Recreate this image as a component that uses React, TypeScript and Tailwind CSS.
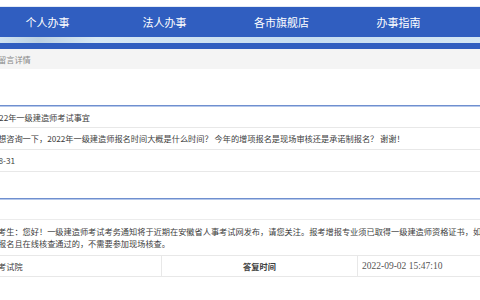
const navItems = ["个人办事", "法人办事", "各市旗舰店", "办事指南"];

const App = () => {
  return (
    <div
      className="w-[480px] h-[300px] overflow-hidden bg-white text-[#3d3d3d]"
      style={{ fontFamily: '"Noto Sans CJK SC", "Liberation Sans", sans-serif' }}
    >
      {/* top bar */}
      <div className="h-[7px] bg-white border-b border-[#e4ebf5]" />
      <div className="h-[30px] bg-[#305ec0] flex items-center text-white text-[11px] whitespace-nowrap">
        <div className="flex -ml-[11px]">
          {navItems.map((item) => (
            <div key={item} className="w-[117px] shrink-0 text-center">
              {item}
            </div>
          ))}
        </div>
      </div>
      <div className="h-[6px] bg-[linear-gradient(90deg,#cfe2f1_0%,#bcd1e2_8%,#d7e8f4_20%,#cde1f1_45%,#c6ddf1_65%,#d5e7f4_100%)]" />
      <div className="h-[6px] bg-[#305ec0]" />

      {/* breadcrumb */}
      <div className="h-[20px] bg-[#f4f4f4] flex items-center text-[8.2px] text-[#888] whitespace-nowrap">
        <span className="-ml-[2px]">留言详情</span>
      </div>
      <div className="h-[36px]" />

      {/* question table */}
      <div className="h-px bg-[#6f8fcf]" />
      <div className="h-px bg-[#b6c8ea]" />
      <div className="text-[8.2px] whitespace-nowrap">
        <div className="h-[21px] flex items-center border-b border-[#e8e8e8]">
          <span className="-ml-[10px]">2022年一级建造师考试事宜</span>
        </div>
        <div className="h-[22px] flex items-center border-b border-[#e8e8e8]">
          <span className="-ml-[2px]">
            想咨询一下，2022年一级建造师报名时间大概是什么时间？ 今年的增项报名是现场审核还是承诺制报名？ 谢谢！
          </span>
        </div>
        <div className="h-[22px] flex items-center border-b border-[#e8e8e8]">
          <span className="-ml-[27px]">2022-08-31</span>
        </div>
        <div className="h-[26px]" />
      </div>
      <div className="h-px bg-[#6f8fcf]" />
      <div className="h-px bg-[#b6c8ea]" />

      {/* reply table */}
      <div className="text-[8.2px] whitespace-nowrap">
        <div className="h-[20px] border-b border-[#ececec]" />
        <div className="h-[36px] pt-[5px] leading-[12px] border-b border-[#e8e8e8]">
          <div className="-ml-[2px]">
            考生：您好！一级建造师考试考务通知将于近期在安徽省人事考试网发布，请您关注。报考增报专业须已取得一级建造师资格证书，如
          </div>
          <div className="-ml-[2px]">报名且在线核查通过的，不需要参加现场核查。</div>
        </div>
        <div className="h-[21px] flex border-b border-[#e8e8e8]">
          <div className="w-[162px] shrink-0 flex items-center border-r border-[#e8e8e8]">
            <span className="-ml-[2px]">考试院</span>
          </div>
          <div className="w-[196px] shrink-0 flex items-center justify-center font-bold border-r border-[#e8e8e8]">
            答复时间
          </div>
          <div
            className="flex-1 flex items-center pl-[4px] text-[9.5px] text-[#555]"
            style={{ fontFamily: '"Liberation Serif", serif' }}
          >
            2022-09-02 15:47:10
          </div>
        </div>
      </div>
    </div>
  );
};

export default App;
